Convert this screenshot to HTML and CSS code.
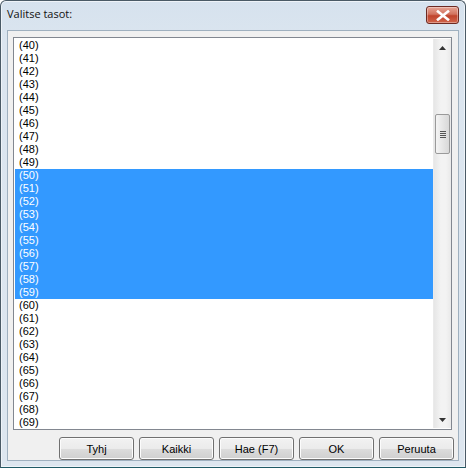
FILE: index.html
```html
<!DOCTYPE html>
<html>
<head>
<meta charset="utf-8">
<link rel="stylesheet" href="styles.css">
</head>
<body>
<div class="window">
  <div class="titlebar">
    <span class="title">Valitse tasot:</span>
    <div class="close">
      <svg width="14" height="11" viewBox="0 0 14 11"><path d="M2 1.5 L12 9.5 M12 1.5 L2 9.5" stroke="#fff" stroke-width="2.6" stroke-linecap="square"/></svg>
    </div>
  </div>
  <div class="client">
    <div class="listbox">
      <div class="items">
        <div class="item">(40)</div><div class="item">(41)</div><div class="item">(42)</div><div class="item">(43)</div><div class="item">(44)</div>
        <div class="item">(45)</div><div class="item">(46)</div><div class="item">(47)</div><div class="item">(48)</div><div class="item">(49)</div>
        <div class="item sel">(50)</div><div class="item sel">(51)</div><div class="item sel">(52)</div><div class="item sel">(53)</div><div class="item sel">(54)</div>
        <div class="item sel">(55)</div><div class="item sel">(56)</div><div class="item sel">(57)</div><div class="item sel">(58)</div><div class="item sel">(59)</div>
        <div class="item">(60)</div><div class="item">(61)</div><div class="item">(62)</div><div class="item">(63)</div><div class="item">(64)</div>
        <div class="item">(65)</div><div class="item">(66)</div><div class="item">(67)</div><div class="item">(68)</div><div class="item">(69)</div>
      </div>
      <div class="scrollbar">
        <div class="arrow"><svg width="7" height="4" viewBox="0 0 7 4"><path d="M0 4 L3.5 0 L7 4 Z" fill="#333"/></svg></div>
        <div class="track">
          <div class="gap-top"></div>
          <div class="thumb">
            <div class="grip"></div><div class="grip"></div><div class="grip"></div><div class="grip"></div>
          </div>
        </div>
        <div class="arrow"><svg width="7" height="4" viewBox="0 0 7 4"><path d="M0 0 L3.5 4 L7 0 Z" fill="#333"/></svg></div>
      </div>
    </div>
    <div class="buttons">
      <div class="btn">Tyhj</div>
      <div class="btn">Kaikki</div>
      <div class="btn">Hae (F7)</div>
      <div class="btn">OK</div>
      <div class="btn">Peruuta</div>
    </div>
  </div>
</div>
</body>
</html>
```
FILE: styles.css
```css
html, body {
  margin: 0;
  padding: 0;
  background: #ffffff;
}
.window {
  width: 466px;
  height: 468px;
  box-sizing: border-box;
  border: 1px solid #4a5a66;
  border-bottom-color: #1f5a66;
  border-radius: 6px 6px 0 0;
  background: linear-gradient(#d6e2ee, #dbe5ef 40px, #dde6ef);
  display: flex;
  flex-direction: column;
  padding: 0 6px 6px 6px;
  box-shadow: inset 0 0 0 1px #eef3f8;
}
.titlebar {
  height: 29px;
  display: flex;
  align-items: flex-start;
  justify-content: space-between;
  flex: none;
}
.title {
  font-family: "Open Sans", "Liberation Sans", sans-serif;
  font-size: 11px;
  color: #111;
  margin-top: 5px;
  margin-left: 0;
}
.close {
  width: 31px;
  height: 16px;
  margin-top: 5px;
  margin-right: 0;
  border: 1px solid #6d2a22;
  border-radius: 3px;
  background: linear-gradient(#e7a594, #d2735f 45%, #c0442d 55%, #d0654b);
  display: flex;
  align-items: center;
  justify-content: center;
  box-shadow: inset 0 0 0 1px rgba(255,255,255,0.35);
}
.client {
  flex: 1;
  background: #f0f0f0;
  border: 1px solid #9fb0bf;
  display: flex;
  flex-direction: column;
  padding: 6px 6px 0 5px;
}
.listbox {
  height: 393px;
  border: 1px solid #828790;
  background: #fff;
  display: flex;
  box-sizing: border-box;
  padding: 1px 0 1px 1px;
}
.items {
  flex: 1;
  display: flex;
  flex-direction: column;
  overflow: hidden;
}
.item {
  height: 13px;
  line-height: 13px;
  font-family: "Liberation Sans", Arial, sans-serif;
  font-size: 11px;
  color: #000;
  padding-left: 4px;
}
.item.sel {
  background: #3399ff;
  color: #fff;
}
.scrollbar {
  width: 17px;
  display: flex;
  flex-direction: column;
  background: linear-gradient(90deg, #e6e6e6, #f3f3f3 40%, #f3f3f3 70%, #e9e9e9);
  border-left: 1px solid #eaeaea;
}
.arrow {
  height: 17px;
  display: flex;
  align-items: center;
  justify-content: center;
  flex: none;
}
.track {
  flex: 1;
  display: flex;
  flex-direction: column;
  align-items: center;
}
.gap-top {
  height: 58px;
  flex: none;
}
.thumb {
  width: 13px;
  height: 38px;
  border: 1px solid #9a9a9a;
  border-radius: 2px;
  background: linear-gradient(90deg, #f4f4f4, #e6e6e6 50%, #d8d8d8);
  display: flex;
  flex-direction: column;
  align-items: center;
  justify-content: center;
  gap: 1px;
}
.grip {
  width: 6px;
  height: 1px;
  background: #555;
}
.buttons {
  display: flex;
  justify-content: flex-end;
  gap: 5px;
  margin-top: 7px;
  margin-right: -2px;
}
.btn {
  width: 73px;
  height: 21px;
  border: 1px solid #707070;
  border-radius: 3px;
  background: linear-gradient(#f2f2f2, #ebebeb 50%, #dddddd 50%, #cfcfcf);
  box-shadow: inset 0 0 0 1px #fcfcfc;
  display: flex;
  align-items: center;
  justify-content: center;
  font-family: "Liberation Sans", Arial, sans-serif;
  font-size: 11px;
  color: #000;
}
```
